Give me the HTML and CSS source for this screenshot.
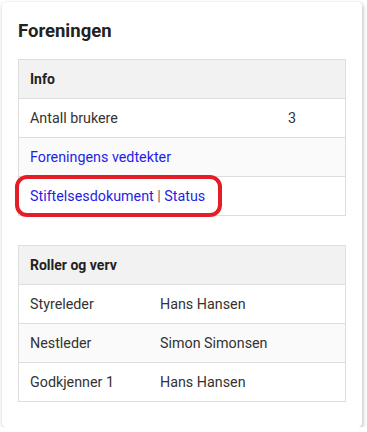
FILE: index.html
```html
<!DOCTYPE html>
<html>
<head>
<meta charset="utf-8">
<link rel="stylesheet" href="styles.css">
</head>
<body>
<div class="card">
  <h1 class="title">Foreningen</h1>
  <table class="tbl">
    <thead><tr><th colspan="2">Info</th></tr></thead>
    <tbody>
      <tr><td class="c1">Antall brukere</td><td class="c2">3</td></tr>
      <tr class="alt"><td colspan="2"><a href="#">Foreningens vedtekter</a></td></tr>
      <tr><td colspan="2" class="hl"><a href="#">Stiftelsesdokument</a> <span class="sep">|</span> <a href="#">Status</a><span class="ring"></span></td></tr>
    </tbody>
  </table>
  <table class="tbl roles">
    <thead><tr><th colspan="2">Roller og verv</th></tr></thead>
    <tbody>
      <tr><td class="r1">Styreleder</td><td>Hans Hansen</td></tr>
      <tr class="alt"><td class="r1">Nestleder</td><td>Simon Simonsen</td></tr>
      <tr><td class="r1">Godkjenner 1</td><td>Hans Hansen</td></tr>
    </tbody>
  </table>
</div>
</body>
</html>
```
FILE: styles.css
```css
html, body { margin: 0; padding: 0; background: #ffffff; }
body { font-family: Roboto, "Liberation Sans", sans-serif; color: #222; padding: 2px 0 0 2px; }
.card {
  width: 360px;
  height: 425px;
  box-sizing: border-box;
  background: #fff;
  border-radius: 4px;
  box-shadow: 1px 2px 4px rgba(0,0,0,0.25), 0 0 2px rgba(0,0,0,0.08);
  padding: 16px 16px 0 16px;
}
.title {
  margin: 0 0 16px 0;
  font-size: 18.5px;
  line-height: 24px;
  font-weight: 700;
  color: #222;
  padding-top: 1px;
}
.tbl {
  width: 328px;
  border-collapse: collapse;
  border: 1px solid #dedede;
  font-size: 14.3px;
  line-height: 20px;
  margin-bottom: 29px;
}
.tbl th, .tbl td {
  border-top: 1px solid #dedede;
  border-bottom: 1px solid #dedede;
  padding: 9px 10px 9px 11px;
  text-align: left;
}
.tbl th { background: #f2f2f2; font-weight: 700; color: #222; font-size: 14px; }
.tbl td { color: #333; }
.tbl tr.alt td { background: #fafafa; }
.c1 { width: 237px; }
.r1 { width: 109px; }
a { color: #1f1fe6; text-decoration: none; }
.sep { color: #666; }
.hl { position: relative; }
.ring {
  position: absolute;
  left: -4px;
  top: -2px;
  width: 199px;
  height: 34px;
  border: 4px solid #e41e26;
  border-radius: 12px;
}
```
